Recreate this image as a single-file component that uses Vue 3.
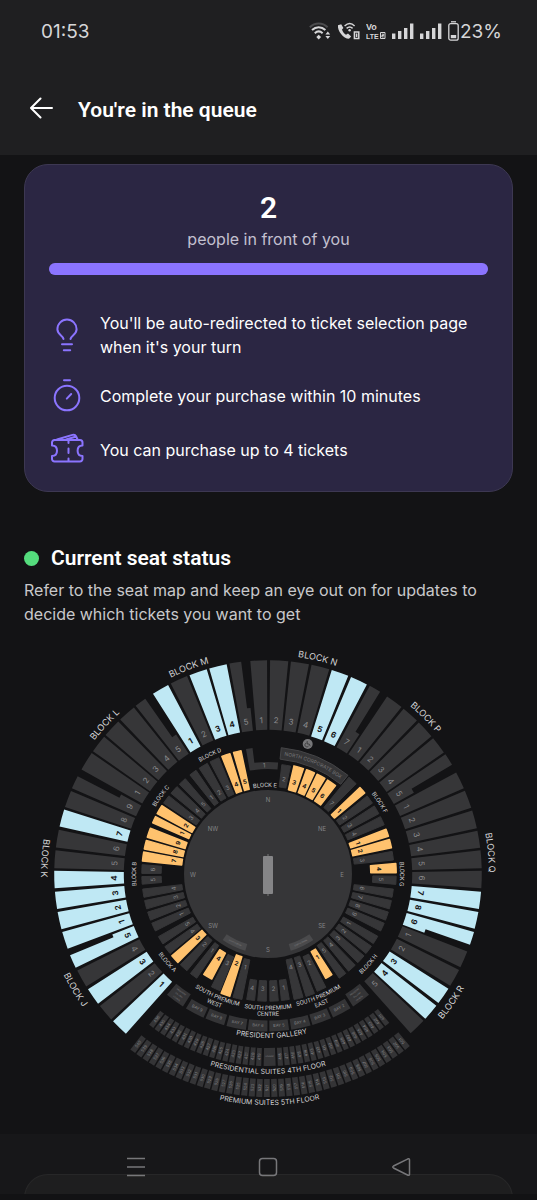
<template>
  <div class="screen">
    <header class="top">
      <div class="status">
        <span class="clock">01:53</span>
        <div class="status-icons">
          <svg width="22" height="18" viewBox="0 0 22 18" fill="none" stroke="#d6d6d8" stroke-width="2">
            <path d="M0.8 5.2C6 0.2 13.400 0.200 18.600 5.200" stroke="#4c4c4e" />
            <path d="M3 8C7 4.2 12.400 4.200 16.400 8" />
            <path d="M5.800 11.200C8.200 9 11.200 9 13.600 11.200" />
            <path d="M9.700 12.800l2.400 2.200-2.400 2.400-2.400-2.400z" fill="#d6d6d8" stroke="none" />
            <path d="M18.800 9.600l2.400 3h-4.800zM18.800 17l2.400-3h-4.800z" fill="#d6d6d8" stroke="none" />
          </svg>
          <svg width="23" height="18" viewBox="0 0 23 18" fill="none" stroke="#d6d6d8" stroke-width="1.500">
            <path d="M1 3.200C0.200 8.800 6.400 16.600 12 16.800L14.200 14.400 11 11.600 9 12.800C7 11.600 5.600 9.600 5 7.600L6.400 6 4.200 2.200Z" fill="#d6d6d8" stroke="none" />
            <path d="M7.600 4C10.800 1 14.600 1 17.600 4M9.600 6.400C11.600 4.600 13.800 4.600 15.600 6.400" />
            <circle cx="12.600" cy="8.200" r="1.200" fill="#d6d6d8" stroke="none" />
            <path d="M17.400 10h4.400v6.600h-4.400zM19.600 11.500v3.600" />
          </svg>
          <svg class="volte" width="20" height="18" viewBox="0 0 20 18">
            <text x="0" y="8">Vo</text>
            <text x="0" y="17">LTE</text>
            <path d="M14.500 10.500h4.500v6h-4.500zM15.800 12.200h1.900v1.300h-1.900v1.400h1.900" fill="none" stroke="#d6d6d8" />
          </svg>
          <svg v-for="n in 2" :key="n" width="22" height="18" viewBox="0 0 22 18" fill="#d6d6d8">
            <path d="M0 11.500h3.400V17H0zM6 9h3.400v8H6zM12 6h3.400v11H12zM18 1.500h3.400V17H18z" />
          </svg>
          <span class="battery">
            <svg width="11" height="20" viewBox="0 0 11 20" fill="none" stroke="#d6d6d8" stroke-width="1.300">
              <path d="M3 0.800h5" />
              <rect x="0.800" y="2.600" width="9.400" height="16.600" rx="2" />
              <path d="M2.800 14h5.400v3.200H2.800z" fill="#d6d6d8" stroke="none" />
            </svg>
            23%
          </span>
        </div>
      </div>
      <div class="bar">
        <button class="back" aria-label="Back">
          <svg width="24" height="22" viewBox="0 0 24 22" fill="none" stroke="#fff" stroke-width="2" stroke-linecap="round" stroke-linejoin="round">
            <path d="M22 11H1.500M10.500 1.500L1 11l9.500 9.500" />
          </svg>
        </button>
        <h1>You're in the queue</h1>
      </div>
    </header>

    <main>
      <section class="card">
        <div class="count">2</div>
        <p class="ahead">people in front of you</p>
        <div class="progress"><div class="progress-fill" :style="{ width: progress + '%' }"></div></div>
        <ul class="tips">
          <li>
            <svg class="tip-icon" viewBox="0 0 36 34">
              <path d="M14.500 21C13.800 17.200 8.400 16.500 8.400 11.200a9.600 9.600 0 0 1 19.200 0C27.600 16.500 22.200 17.200 21.500 21M13 26.300h10M14.800 32.300h6.400" />
            </svg>
            <span>You'll be auto-redirected to ticket selection page when it's your turn</span>
          </li>
          <li>
            <svg class="tip-icon" viewBox="0 0 36 34">
              <circle cx="18" cy="19" r="12.300" />
              <path d="M15 1.300h6M17.800 19.600l4.400-4.600" />
            </svg>
            <span>Complete your purchase within 10 minutes</span>
          </li>
          <li>
            <svg class="tip-icon" viewBox="0 0 36 34">
              <path d="M5.500 7H31a2.500 2.500 0 0 1 2.500 2.500v3C29.500 12.500 28.600 15.500 28.600 17.800S29.500 23 33.500 23v3a2.500 2.500 0 0 1-2.500 2.500H5.500A2.500 2.500 0 0 1 3 26v-3C7 23 8 20.100 8 17.800S7 12.500 3 12.500v-3A2.500 2.500 0 0 1 5.500 7ZM8 6.500L23.500 1.900Q26 1.200 27 3.200L28.600 6.500M17 6.500L26.500 3.800M19.500 7v3M19.500 15.500v4.500M19.500 25.500v3" />
            </svg>
            <span>You can purchase up to 4 tickets</span>
          </li>
        </ul>
      </section>

      <section class="seats">
        <div class="seats-head">
          <span class="dot"></span>
          <h2>Current seat status</h2>
        </div>
        <p class="hint">Refer to the seat map and keep an eye out on for updates to decide which tickets you want to get</p>

        <svg class="map" viewBox="-244 -234 489 484">
          <defs>
            <path v-for="t in titles" :id="t.id" :key="t.id" :d="t.path" />
          </defs>

          <circle r="84" class="field" />
          <rect x="-5" y="-18" width="10" height="38" rx="1" class="pitch" />
          <path d="M0 -20v2M0 20v2" stroke="#777" />
          <text v-for="c in compass" :key="c[0]" :x="c[1]" :y="c[2]" class="compass">{{ c[0] }}</text>

          <!-- sight screens -->
          <g v-for="a in [-154.500, 154.500]" :key="a">
            <path :d="wedge(a - 9, a + 9, 73, 80)" class="screen-box" />
            <text :transform="place(a, 77, true)" class="micro">SIGHTSCREEN</text>
          </g>

          <!-- stands -->
          <g v-for="s in stands" :key="s.key" :class="['stand', s.ring, s.state]">
            <path :d="s.d" />
            <text :transform="s.at">{{ s.label }}</text>
          </g>

          <path :d="northEast" class="grey-line" />
          <text :transform="place(-2, 106.500)" class="small-num">1</text>
          <path :d="wedge(6, 39, 115.500, 127)" class="corporate" />
          <g transform="translate(39.700 -130)">
            <circle r="5" fill="#777779" />
            <path d="M-0.500 -3v3h2l1 2.200M-1.300 -1a2 2 0 1 0 2.200 3" fill="none" stroke="#2b2b2d" stroke-width="0.700" />
          </g>

          <!-- hospitality rows -->
          <g v-for="b in bays" :key="b.a">
            <path :d="wedge(b.a - 3.600, b.a + 3.600, b.r0, 157.500)" class="suite" />
            <text v-for="(line, i) in b.lines" :key="i" :transform="place(b.a, b.lines.length > 1 ? 147 + i * 4 : 153, true)" :class="b.lines.length > 1 ? 'micro' : 'bay'">{{ line }}</text>
          </g>
          <g v-for="s in suites" :key="s.label">
            <path :d="s.d" class="suite" />
            <text :transform="s.at" class="suite-num">{{ s.label }}</text>
          </g>
          <path :d="wedge(177.700, 181.300, 174, 192)" class="suite" />
          <text :transform="place(179.500, 183, true)" class="micro">LOUNGE</text>

          <text v-for="t in titles" :key="t.id" class="title" :font-size="t.size" :class="{ dim: t.dim, compact: t.size === 6 }">
            <textPath :href="'#' + t.id" startOffset="50%">{{ t.text }}</textPath>
          </text>
        </svg>
      </section>

      <section class="next-card"></section>
    </main>

    <nav class="sysnav">
      <button aria-label="Recent apps">
        <svg width="20" height="20" viewBox="0 0 20 20"><path d="M1 1.500h18M1 10h18M1 18.500h18" /></svg>
      </button>
      <button aria-label="Home">
        <svg width="20" height="20" viewBox="0 0 20 20"><rect x="1.500" y="1.500" width="17" height="17" rx="3" /></svg>
      </button>
      <button aria-label="Back">
        <svg width="20" height="20" viewBox="0 0 20 20"><path d="M17 1.800L2.500 9q-1.500 1 0 2L17 18.200q1.500 .5 1.500-1V2.800q0-1.500-1.500-1Z" /></svg>
      </button>
    </nav>
  </div>
</template>

<script setup>
const progress = 100

// Angles are in degrees, clockwise from north. The map's origin is the pitch.
const point = (a, r) => {
  const rad = (a * Math.PI) / 180
  return `${(r * Math.sin(rad)).toFixed(2)} ${(-r * Math.cos(rad)).toFixed(2)}`
}

const wedge = (a0, a1, r0, r1, inset = 0) => {
  const o = (inset / r1) * 57.3
  const i = (inset / r0) * 57.3
  const R = r1 - inset
  const r = r0 + inset
  return `M${point(a0 + i, r)}L${point(a0 + o, R)}A${R} ${R} 0 0 1 ${point(a1 - o, R)}L${point(a1 - i, r)}A${r} ${r} 0 0 0 ${point(a0 + i, r)}Z`
}

// A wedge whose inner part is wider on one side than its outer part
const notched = (a0, a1, ext, r0, r1, step) => {
  if (ext > a1) {
    return `M${point(a0, r0)}L${point(a0, r1)}A${r1} ${r1} 0 0 1 ${point(a1, r1)}L${point(a1, step)}L${point(ext, step)}L${point(ext, r0)}A${r0} ${r0} 0 0 0 ${point(a0, r0)}Z`
  }
  return `M${point(ext, r0)}L${point(ext, step)}L${point(a0, step)}L${point(a0, r1)}A${r1} ${r1} 0 0 1 ${point(a1, r1)}L${point(a1, r0)}A${r0} ${r0} 0 0 0 ${point(ext, r0)}Z`
}

const place = (a, r, flip = false) => `translate(${point(a, r)}) rotate(${flip ? a + 180 : a})`

// [block, flipped labels, [label, from, to, available, extended angle]]
const outer = [
  ['N', false, [[1, -4.8, -0.2], [2, 0.5, 5.5], [3, 6.1, 11.1], [4, 11.7, 16.7], [5, 17.3, 22.1, 1], [6, 22.8, 27.6, 1], [7, 28.4, 31.6, 0, 33.2]]],
  ['M', false, [[1, -32.6, -27.8, 1], [2, -27.1, -22.2], [3, -21.6, -16.6, 1], [4, -16, -11.1, 1], [5, -10.4, -7.2, 0, -6]]],
  ['L', false, [[1, -60.8, -55.5], [2, -55, -50], [3, -49.5, -44.4], [4, -43.8, -38.8], [5, -38.2, -35, 0, -33.4]]],
  ['K', false, [[1, -110.5, -105.7, 1], [2, -105, -100.2, 1], [3, -99.5, -94.7, 1], [4, -93.9, -89.1, 1], [5, -88.5, -83.6], [6, -82.9, -78], [7, -77.2, -72.4, 1], [8, -71.8, -67.1], [9, -66.4, -62.8, 0, -61.6]]],
  ['J', true, [[1, -138.4, -133.5, 1], [2, -132.9, -128.1], [3, -127.4, -122.6, 1], [4, -121.8, -116.8], [5, -116, -112.3, 1, -111.2]]],
  ['P', false, [[1, 33.8, 38.7], [2, 39.3, 44.2], [3, 44.8, 49.9], [4, 50.5, 55.4], [5, 56, 59.3, 0, 60.9]]],
  ['Q', false, [[1, 61.6, 66.4], [2, 67, 72], [3, 72.7, 77.7], [4, 78.3, 83], [5, 83.6, 88.5], [6, 89.1, 93.9], [7, 94.7, 99.5, 1], [8, 100.2, 104.9, 1], [9, 105.7, 109.3, 1, 110.6]]],
  ['R', true, [[1, 111.2, 115.9], [2, 116.6, 121.6], [3, 122.4, 127.2, 1], [4, 128, 132.7, 1], [5, 133.3, 138.2]]]
]

// [block, flipped labels, [label, from, to, available, inner radius, outer radius]]
const inner = [
  ['E', false, [[2, 6.8, 12.2, 0, 87, 111], [3, 13.1, 19, 1, 86, 112], [4, 19.9, 25.1, 1, 86, 112], [5, 25.8, 31.2, 1, 86, 112], [6, 32, 37.8, 1, 86, 112], [7, 39.5, 44.7]]],
  ['D', false, [[1, -38.6, -34.4], [2, -33.4, -28.4], [3, -27.7, -22.6], [4, -21.8, -17.2, 1], [5, -16.2, -12, 1]]],
  ['C', false, [[1, -66.4, -62.6, 1], [2, -61.8, -56.9, 1], [3, -56.2, -51.4], [4, -50.6, -45.8], [5, -45, -40.6]]],
  ['B', false, [[1, -117.2, -112.6], [2, -111.8, -107.2], [3, -106.4, -101.8], [4, -101, -96.5], [5, -95, -90.8, 0, 106], [6, -90.1, -85.4, 0, 106], [7, -84.5, -79.6, 1], [8, -78.9, -74.2, 1], [9, -73.4, -68.4, 1]]],
  ['A', true, [[1, -146, -141.7], [2, -140.4, -135.6], [3, -134.8, -130, 1], [4, -129.4, -124.8], [5, -124, -119.4]]],
  ['SW', true, [[4, -152.2, -147, 1, 89, 120], [3, -158, -153, 0, 89, 127], [2, -163, -158.2, 1, 86, 129], [1, -168.6, -163.8, 0, 87, 129]]],
  ['SC', true, [[4, -174.3, -170, 0, 106, 128], [3, -179.6, -175, 0, 106, 128], [2, 175, 179.5, 0, 106, 128], [1, 170, 174.3, 0, 106, 128]]],
  ['SE', true, [[4, 163.8, 168.6, 0, 87, 129], [3, 158.4, 163.1, 0, 87, 129], [2, 152.6, 157.6, 0, 89, 128], [1, 147.2, 151.4, 1, 88, 120]]],
  ['H', true, [[5, 141.6, 146], [4, 135.9, 140.7], [3, 130.1, 135], [2, 124.6, 129.4], [1, 119.2, 123.8]]],
  ['G', false, [[1, 68.9, 73, 1], [2, 73.8, 78.4, 1], [3, 79.3, 84], [4, 84.9, 89.8, 1, 102, 129], [5, 90.6, 95, 0, 104, 129], [6, 96.5, 101], [7, 101.8, 106.4], [8, 107.2, 111.8], [9, 112.6, 117.2]]],
  ['F', false, [[1, 46.4, 50.4, 1], [2, 51.4, 56.2], [3, 57, 61.8], [4, 62.6, 67.4]]]
]

const stands = []
for (const [block, flip, items] of outer) {
  for (const [label, a0, a1, on, ext] of items) {
    const mid = ext ? (Math.min(a0, ext) + Math.max(a1, ext)) / 2 : (a0 + a1) / 2
    stands.push({
      key: block + label,
      label,
      ring: 'outer',
      state: on ? 'open' : 'sold',
      d: ext ? notched(a0, a1, ext, 144, 214, 167) : wedge(a0, a1, 144, 214, 0.2),
      at: place(mid, flip ? 156 : 151, flip)
    })
  }
}
for (const [block, flip, items] of inner) {
  for (const [label, a0, a1, on, r0 = 86, r1 = 127] of items) {
    stands.push({
      key: block + label,
      label,
      ring: 'inner',
      state: on ? 'open' : 'sold',
      d: wedge(a0, a1, r0, r1, 0.8),
      at: place((a0 + a1) / 2, r0 + (flip ? 11 : 7), flip)
    })
  }
}

const northEast = `M${point(-10, 105)}L${point(-10, 127)}L${point(-7, 127)}L${point(-7, 112)}A112 112 0 0 1 ${point(5.2, 112)}L${point(5.2, 105)}A105 105 0 0 0 ${point(-10, 105)}Z`

const bayAngles = [-143.7, -152.2, -160.2, -168.3, -176.2, 175.9, 167.9, 160, 152, 143.7]
const bays = bayAngles.map((a, i) => {
  const end = i === 0 || i === 9
  return {
    a,
    r0: end ? 143 : 146.5,
    lines: end ? ['PRESIDENT', 'GALLERY', 'LOUNGE'] : ['BAY ' + (10 - i)]
  }
})

const suites = []
const addSuite = (label, a, r0, r1) => {
  suites.push({
    label,
    d: wedge(a - 0.78, a + 0.78, r0, r1),
    at: `translate(${point(a, (r0 + r1) / 2)}) rotate(${a + 90})`
  })
}
for (let i = 0; i < 18; i++) {
  addSuite(401 + i, 141.6 + i * 2.04, 174, 192)
  addSuite(419 + i, 182.8 + i * 2.04, 174, 192)
}
for (let i = 0; i < 40; i++) {
  addSuite(501 + i, 141.3 + i * 1.95, 205, 223)
}

// [text, centre angle, baseline radius, size, reads anticlockwise]
const titles = [
  ['BLOCK L', -47.5, 219, 9],
  ['BLOCK M', -21, 219, 9],
  ['BLOCK N', 13, 219, 9],
  ['BLOCK P', 45.2, 220, 9],
  ['BLOCK Q', 84.5, 221, 9],
  ['BLOCK R', 125, 227, 9, true],
  ['BLOCK K', -86, 227, 9, true],
  ['BLOCK J', -121, 228, 9, true],
  ['BLOCK D', -26, 131, 6],
  ['BLOCK C', -54, 131, 6],
  ['BLOCK B', -90, 132, 6],
  ['BLOCK E', -2, 87, 6],
  ['BLOCK F', 57.3, 131, 6],
  ['BLOCK G', 90, 132, 6],
  ['BLOCK H', 131.9, 137, 6, true],
  ['BLOCK A', -131.2, 136, 6, true],
  ['SOUTH PREMIUM', -157.5, 135, 6, true],
  ['WEST', -157.5, 142, 6, true],
  ['SOUTH PREMIUM', 180, 136, 6, true],
  ['CENTRE', 180, 142, 6, true],
  ['SOUTH PREMIUM', 157.5, 135, 6, true],
  ['EAST', 157.5, 142, 6, true],
  ['PRESIDENT GALLERY', 178.7, 164, 7, true],
  ['PRESIDENTIAL SUITES 4TH FLOOR', 180, 200, 7, true],
  ['PREMIUM SUITES 5TH FLOOR', 179.6, 231, 7, true],
  ['NORTH CORPORATE BOX', 22.5, 119.5, 5, false, true]
].map(([text, a, r, size, back, dim], i) => ({
  id: 'arc-' + i,
  text,
  size,
  dim,
  path: back
    ? `M${point(a + 40, r)}A${r} ${r} 0 0 0 ${point(a - 40, r)}`
    : `M${point(a - 40, r)}A${r} ${r} 0 0 1 ${point(a + 40, r)}`
}))

const compass = [
  ['N', 0, -72],
  ['NE', 54, -43],
  ['E', 74, 3],
  ['SE', 54, 54],
  ['S', 0, 78],
  ['SW', -55, 54],
  ['W', -75, 3],
  ['NW', -55, -43]
]
</script>

<style>
body {
  margin: 0;
  background: #131315;
}
</style>

<style scoped>
.screen {
  min-height: 100vh;
  background: #131315;
  color: #fff;
  font-family: Inter, "Noto Sans", sans-serif;
}

.top {
  box-sizing: border-box;
  padding: 18px 35px 0 41px;
  height: 155px;
  background: #1f1f21;
}

.status {
  display: flex;
  justify-content: space-between;
  align-items: center;
  height: 26px;
  color: #d6d6d8;
  font-size: 19px;
}

.status-icons {
  display: flex;
  align-items: center;
  gap: 6px;
}

.volte {
  font: bold 9px "Liberation Sans", sans-serif;
  fill: #d6d6d8;
}

.volte text:last-of-type {
  font-size: 7px;
}

.battery {
  display: flex;
  align-items: center;
  gap: 1px;
}

.bar {
  display: flex;
  align-items: center;
  gap: 24px;
  margin: 48px 0 0 -11px;
}

.back {
  display: flex;
  padding: 0 0 4px;
  border: 0;
  background: none;
}

h1,
h2 {
  margin: 0;
  font: 600 21px/36px Roboto, sans-serif;
}

main {
  padding: 9px 24px 0;
}

.card {
  padding: 24px 24px 24px;
  border: 1px solid #3d3852;
  border-radius: 24px;
  background: #2b2643;
}

.count {
  font: 600 30px/38px Roboto, sans-serif;
  text-align: center;
}

.ahead {
  margin: 0 0 12px;
  font-size: 16px;
  line-height: 24px;
  text-align: center;
  color: #c3c0d0;
}

.progress {
  height: 12px;
  border-radius: 6px;
  background: #443d66;
}

.progress-fill {
  height: 12px;
  border-radius: 6px;
  background: #8b74ff;
}

.tips {
  display: flex;
  flex-direction: column;
  gap: 20px;
  margin: 36px 0 0;
  padding: 0;
  list-style: none;
  font-size: 16px;
  line-height: 24px;
}

.tips li {
  display: flex;
  align-items: center;
  gap: 15px;
}

.tip-icon {
  flex: none;
  width: 36px;
  height: 34px;
  fill: none;
  stroke: #8b74ff;
  stroke-width: 2;
  stroke-linecap: round;
  stroke-linejoin: round;
}

.seats {
  margin-top: 48px;
}

.seats-head {
  display: flex;
  align-items: center;
  gap: 12px;
}

.dot {
  width: 15px;
  height: 15px;
  border-radius: 50%;
  background: #55dc7d;
}

.hint {
  margin: 2px 0 0;
  font-size: 16px;
  line-height: 24px;
  color: #c8c8ca;
}

.map {
  display: block;
  width: 100%;
  margin-top: 14px;
  font-family: Inter, sans-serif;
  text-anchor: middle;
}

.field {
  fill: #363638;
}

.pitch {
  fill: #858587;
}

.compass {
  font-size: 6px;
  fill: #858587;
}

.screen-box {
  fill: #4a4a4c;
}

.micro {
  font-size: 2px;
  fill: #858587;
}

.bay {
  font-size: 4px;
  fill: #858587;
}

.stand path,
.grey-line {
  fill: #363638;
}

.stand text {
  fill: #8a8a8c;
}

.outer text {
  font-size: 8px;
}

.inner text,
.small-num {
  font-size: 6px;
}

.small-num {
  fill: #8a8a8c;
}

.inner path {
  stroke: #363638;
  stroke-width: 1;
  stroke-linejoin: round;
}

.outer.open path {
  fill: #bfe8f4;
}

.inner.open path {
  fill: #ffc26e;
  stroke: #ffc26e;
  stroke-width: 1.5;
}

.stand.open text {
  fill: #151517;
  font-weight: 700;
}

.corporate {
  fill: #343436;
  stroke: #454547;
  stroke-width: 1;
}

.suite {
  fill: #343436;
}

.suite-num {
  font-size: 4px;
  fill: #858587;
  dominant-baseline: central;
}

.title {
  fill: #d2d2d4;
}

.title.compact {
  font-family: Roboto, sans-serif;
}

.title.dim {
  fill: #747476;
}

.next-card {
  box-sizing: border-box;
  height: 27px;
  margin-top: 50px;
  border: 1px solid #2e2e2e;
  border-bottom: 0;
  border-radius: 24px 24px 0 0;
  background: #1f1f1e;
}

.sysnav {
  position: fixed;
  right: 0;
  bottom: 0;
  left: 0;
  display: flex;
  justify-content: space-around;
  box-sizing: border-box;
  height: 66px;
  padding: 23px 70px 0;
  border-bottom: 6px solid #121214;
  background: rgba(31, 31, 32, 0.4);
}

.sysnav button {
  display: flex;
  align-items: flex-start;
  padding: 0;
  border: 0;
  background: none;
}

.sysnav svg {
  fill: none;
  stroke: #77777a;
  stroke-width: 1.5;
}
</style>
